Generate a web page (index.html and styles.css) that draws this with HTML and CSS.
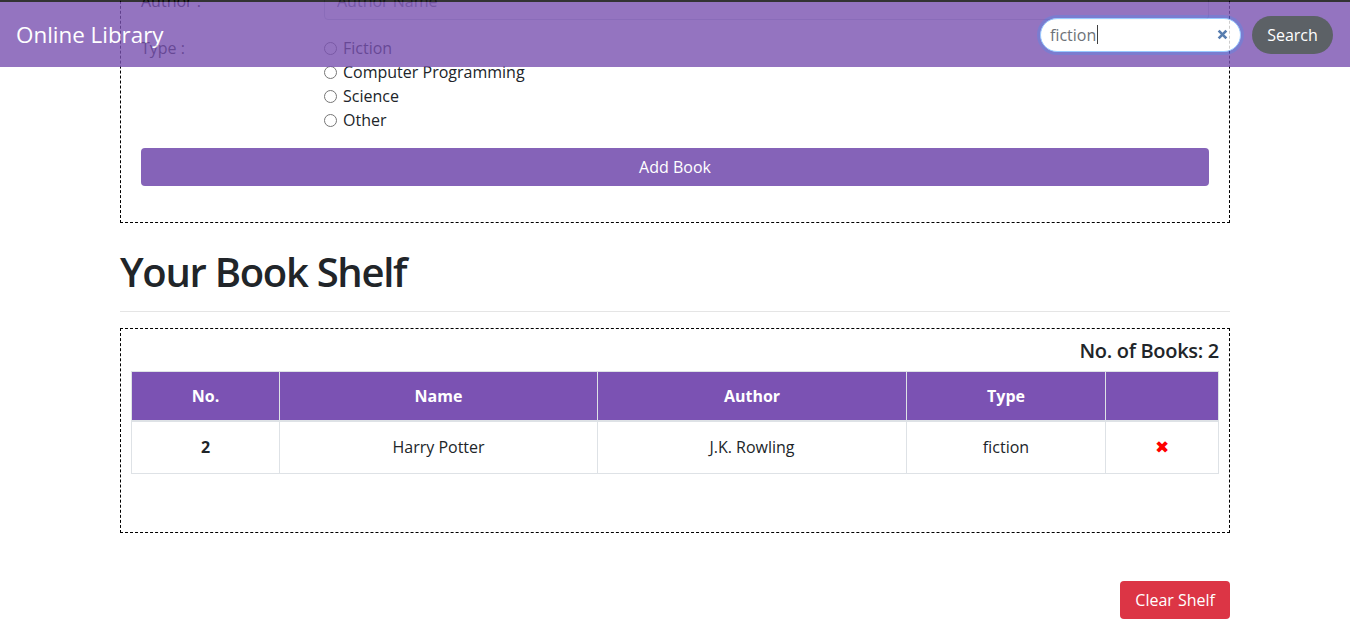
FILE: index.html
```html
<!DOCTYPE html>
<html>
	<head>
	<title>Online Library</title>
	<meta charset="UTF-8">
	<meta name="viewport" content="width=device-width, initial-scale=1.0">
	<link rel="stylesheet" href="styles.css">
	</head>
	<body>
		<nav class="navbar">
			<span class="brand">Online Library</span>
			<form class="search" autocomplete="off">
				<div class="search-input">
					<span class="search-text">fiction</span><span class="caret"></span>
					<svg class="search-clear" viewBox="0 0 10 10" width="11" height="11">
						<path d="M1.5 1.5 L8.5 8.5 M8.5 1.5 L1.5 8.5" />
					</svg>
				</div>
				<button class="btn btn-search" type="button">Search</button>
			</form>
		</nav>

		<div class="container">
			<form class="book-form" autocomplete="off">
				<div class="form-row center">
					<label class="form-label">Author :</label>
					<input class="form-control" type="text" placeholder="Author Name" />
				</div>
				<div class="form-row">
					<label class="form-label">Type :</label>
					<div class="radio-list">
						<label class="radio"><input type="radio" name="type" value="fiction" />Fiction</label>
						<label class="radio"><input type="radio" name="type" value="programming" />Computer Programming</label>
						<label class="radio"><input type="radio" name="type" value="science" />Science</label>
						<label class="radio"><input type="radio" name="type" value="other" />Other</label>
					</div>
				</div>
				<button class="btn btn-add" type="button">Add Book</button>
			</form>

			<h1 class="shelf-title">Your Book Shelf</h1>
			<hr class="divider" />

			<div class="shelf">
				<h5 class="shelf-count">No. of Books: 2</h5>
				<table class="books">
					<thead>
						<tr>
							<th class="col-no">No.</th>
							<th class="col-name">Name</th>
							<th class="col-author">Author</th>
							<th class="col-type">Type</th>
							<th></th>
						</tr>
					</thead>
					<tbody>
						<tr>
							<td class="num">2</td>
							<td>Harry Potter</td>
							<td>J.K. Rowling</td>
							<td>fiction</td>
							<td><span class="delete">&#10006;</span></td>
						</tr>
					</tbody>
				</table>
			</div>

			<div class="actions">
				<button class="btn btn-clear" type="button">Clear Shelf</button>
			</div>
		</div>
	</body>
</html>
```

FILE: styles.css
```css
html {
	overflow: hidden;
}

body {
	margin: 0;
	font-family: "Open Sans", "Noto Sans", sans-serif;
	font-size: 16px;
	line-height: 1.5;
	color: #212529;
	background-color: #fff;
}

/* navbar sits over the page, see-through */
.navbar {
	position: fixed;
	top: 0;
	left: 0;
	right: 0;
	z-index: 10;
	height: 65px;
	display: flex;
	align-items: center;
	justify-content: space-between;
	padding: 0 17px 0 16px;
	border-top: 2px solid #000;
	background-color: #7a52b1;
	opacity: 0.8;
}

.brand {
	color: #fff;
	font-size: 22.4px;
	line-height: 1.5;
}

.search {
	display: flex;
	align-items: center;
	gap: 11px;
}

.search-input {
	box-sizing: border-box;
	width: 201px;
	height: 34px;
	display: flex;
	align-items: center;
	padding: 0 12px 0 9px;
	border: 1px solid #80bdff;
	border-radius: 17px;
	background-color: #fff;
	box-shadow: 0 0 0 3px rgba(0, 123, 255, 0.25);
	color: #495057;
}

.caret {
	width: 1px;
	height: 19px;
	margin-left: 1px;
	background-color: #111;
}

.search-clear {
	margin-left: auto;
	fill: none;
	stroke: #2f5d9b;
	stroke-width: 2.4;
}

.btn {
	font-family: inherit;
	font-size: 16px;
	line-height: 1.5;
	border: 1px solid transparent;
	border-radius: 4px;
	color: #fff;
	cursor: pointer;
}

.btn-search {
	height: 38px;
	width: 81px;
	border-radius: 19px;
	background-color: #343a40;
}

.container {
	width: 1110px;
	margin: 0 auto;
}

.book-form {
	box-sizing: border-box;
	margin-top: -39px;
	padding: 20px 20px 36px;
	border: 1px dashed #000;
}

.form-row {
	display: flex;
	align-items: flex-start;
	margin-bottom: 16px;
}

.form-row.center {
	align-items: center;
}

.form-label {
	flex: none;
	width: 183px;
}

.form-control {
	box-sizing: border-box;
	flex: 1;
	height: 38px;
	padding: 6px 12px;
	font-family: inherit;
	font-size: 16px;
	border: 1px solid #ced4da;
	border-radius: 4px;
	color: #495057;
}

.form-control::placeholder {
	color: #6c757d;
}

.radio-list {
	display: flex;
	flex-direction: column;
}

.radio {
	display: flex;
	align-items: center;
	height: 24px;
}

.radio input {
	width: 13px;
	height: 13px;
	margin: 0 6px 0 0;
}

.btn-add {
	display: block;
	width: 100%;
	height: 38px;
	background-color: #8563b8;
}

.shelf-title {
	margin: 25px 0 0;
	font-size: 40px;
	font-weight: 600;
	letter-spacing: -1.3px;
	line-height: 1.2;
}

.divider {
	margin: 15px 0 16px;
	border: 0;
	border-top: 1px solid rgba(0, 0, 0, 0.1);
}

.shelf {
	padding: 10px;
	border: 1px dashed #000;
}

.shelf-count {
	margin: 0 0 8px;
	text-align: right;
	font-size: 20px;
	font-weight: 600;
	letter-spacing: -0.3px;
	line-height: 1.2;
}

.books {
	width: 100%;
	table-layout: fixed;
	border-collapse: collapse;
	margin-bottom: 48px;
}

.books th,
.books td {
	padding: 12px;
	text-align: center;
	border: 1px solid #dee2e6;
}

.books td {
	padding: 13px 12px 14px;
}

.books th {
	background-color: #7b52b3;
	color: #fff;
	font-weight: 700;
	border-bottom-width: 2px;
}

.books td.num {
	font-weight: 700;
}

/* widths are content widths, padding and border come on top */
.col-no { width: 123px; }
.col-name { width: 293px; }
.col-author { width: 284px; }
.col-type { width: 174px; }

.delete {
	font-family: "DejaVu Sans", sans-serif;
	font-size: 17px;
	line-height: 1;
	color: #f00;
}

.actions {
	margin-top: 48px;
	text-align: right;
}

.btn-clear {
	height: 38px;
	padding: 0 14px;
	background-color: #dc3545;
}
```
